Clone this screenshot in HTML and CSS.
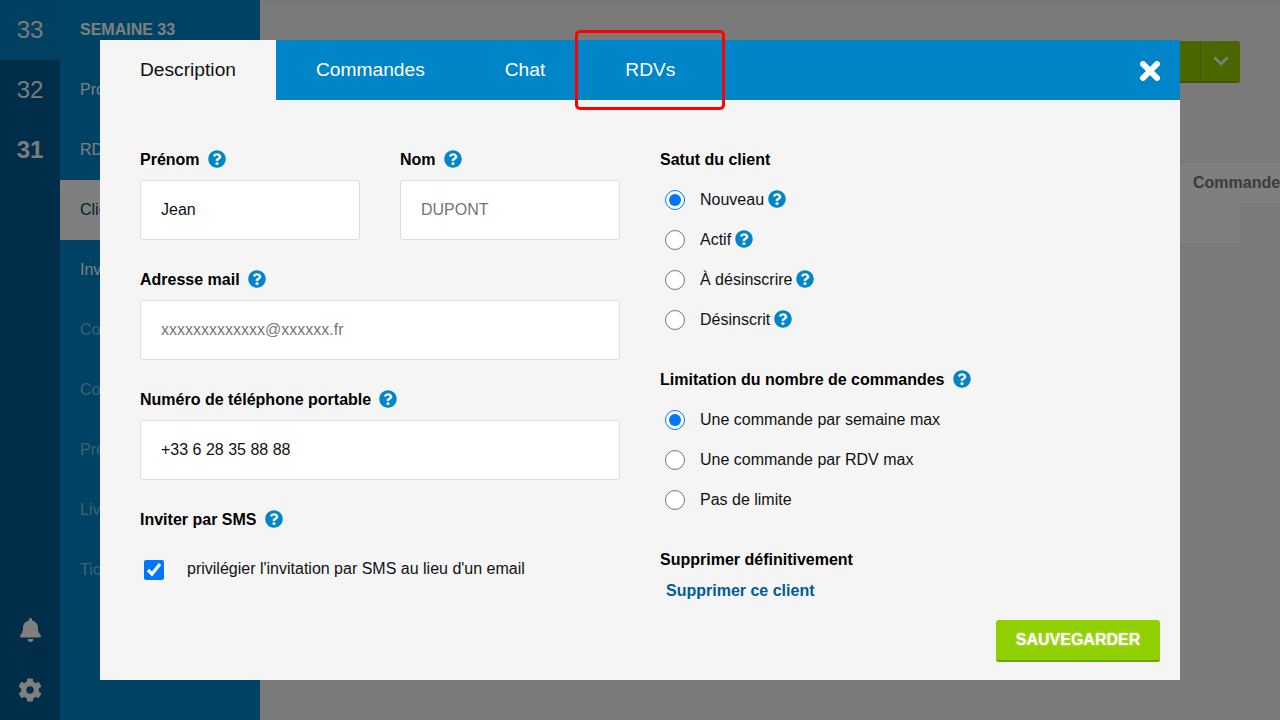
FILE: index.html
```html
<!DOCTYPE html>
<html lang="fr">
<head>
<meta charset="utf-8">
<title>Client</title>
<link rel="stylesheet" href="styles.css">
</head>
<body>
<svg class="defs" width="0" height="0" aria-hidden="true">
  <symbol id="help" viewBox="0 0 512 512"><path d="M504 256c0 136.997-111.043 248-248 248S8 392.997 8 256C8 119.083 119.043 8 256 8s248 111.083 248 248zM262.655 90c-54.497 0-89.255 22.957-116.549 63.758-3.536 5.286-2.353 12.415 2.715 16.258l34.699 26.31c5.205 3.947 12.621 3.008 16.665-2.122 17.864-22.658 30.113-35.797 57.303-35.797 20.429 0 45.698 13.148 45.698 32.958 0 14.976-12.363 22.667-32.534 33.976C247.128 238.528 216 254.941 216 296v4c0 6.627 5.373 12 12 12h56c6.627 0 12-5.373 12-12v-1.333c0-28.462 83.186-29.647 83.186-106.667 0-58.002-60.165-102-116.531-102zM256 338c-25.365 0-46 20.635-46 46 0 25.364 20.635 46 46 46s46-20.636 46-46c0-25.365-20.635-46-46-46z"/></symbol>
</svg>
<div class="app">
  <nav class="rail">
    <div class="week current">33</div>
    <div class="week">32</div>
    <div class="week strong">31</div>
    <div class="rail-spacer"></div>
    <div class="rail-icon"><svg class="bell" viewBox="0 0 448 512"><path d="M224 512c35.32 0 63.97-28.65 63.97-64H160.03c0 35.35 28.65 64 63.97 64zm215.39-149.71c-19.32-20.76-55.47-51.99-55.47-154.29 0-77.7-54.48-139.9-127.94-155.16V32c0-17.67-14.32-32-31.98-32s-31.98 14.33-31.98 32v20.84C118.56 68.1 64.08 130.3 64.08 208c0 102.3-36.15 133.53-55.47 154.29-6 6.45-8.66 14.16-8.61 21.71.11 16.4 12.98 32 32.1 32h383.8c19.12 0 32-15.6 32.1-32 .05-7.55-2.61-15.27-8.61-21.71z"/></svg></div>
    <div class="rail-icon"><svg class="cog" viewBox="0 0 512 512"><path d="M487.4 315.7l-42.6-24.6c4.3-23.2 4.3-47 0-70.2l42.6-24.6c4.9-2.8 7.1-8.6 5.5-14-11.1-35.6-30-67.8-54.7-94.6-3.8-4.1-10-5.1-14.8-2.3L380.8 110c-17.9-15.4-38.5-27.3-60.8-35.1V25.8c0-5.6-3.9-10.5-9.4-11.7-36.7-8.2-74.3-7.8-109.2 0-5.5 1.2-9.4 6.1-9.4 11.7V75c-22.2 7.9-42.8 19.8-60.8 35.1L88.7 85.5c-4.9-2.8-11-1.9-14.8 2.3-24.7 26.7-43.6 58.9-54.7 94.6-1.7 5.4.6 11.2 5.5 14L67.3 221c-4.3 23.2-4.3 47 0 70.2l-42.6 24.6c-4.9 2.8-7.1 8.6-5.5 14 11.1 35.6 30 67.8 54.7 94.6 3.8 4.1 10 5.1 14.8 2.3l42.6-24.6c17.9 15.4 38.5 27.3 60.8 35.1v49.2c0 5.6 3.9 10.5 9.4 11.7 36.7 8.2 74.3 7.8 109.2 0 5.5-1.2 9.4-6.1 9.4-11.7v-49.2c22.2-7.9 42.8-19.8 60.8-35.1l42.6 24.6c4.9 2.8 11 1.9 14.8-2.3 24.7-26.7 43.6-58.9 54.7-94.6 1.5-5.5-.7-11.3-5.6-14.1zM256 336c-44.1 0-80-35.9-80-80s35.9-80 80-80 80 35.9 80 80-35.9 80-80 80z"/></svg></div>
  </nav>
  <aside class="sidebar">
    <div class="side-item title">SEMAINE 33</div>
    <div class="side-item">Produits</div>
    <div class="side-item">RDVs</div>
    <div class="side-item active">Clients</div>
    <div class="side-item">Invitations</div>
    <div class="side-item faded">Commandes</div>
    <div class="side-item faded">Comptes</div>
    <div class="side-item faded">Présentation</div>
    <div class="side-item faded">Livraisons</div>
    <div class="side-item faded">Tickets</div>
  </aside>
  <main class="main">
    <div class="topbar">
      <div class="btn-group"><span class="btn-main"></span><span class="btn-caret"><svg viewBox="0 0 16 10" class="caret"><path d="M1.500 1.500 8 8l6.500-6.500"/></svg></span></div>
    </div>
    <div class="bg-tabs"><span class="bg-tab">Commandes</span></div>
    <div class="bg-panel"></div>
  </main>
</div>

<div class="overlay">
  <section class="modal">
    <header class="tabs">
      <a class="tab selected">Description</a>
      <a class="tab">Commandes</a>
      <a class="tab">Chat</a>
      <a class="tab">RDVs</a>
      <span class="tab-highlight"></span>
      <button class="close" aria-label="Fermer"><svg viewBox="0 0 20 20"><path d="M3 3 17 17M17 3 3 17"/></svg></button>
    </header>
    <div class="modal-body">
      <div class="col-left">
        <div class="name-row">
          <div class="field">
            <label class="label">Prénom <svg class="help"><use href="#help"/></svg></label>
            <input class="input" type="text" value="Jean">
          </div>
          <div class="field">
            <label class="label">Nom <svg class="help"><use href="#help"/></svg></label>
            <input class="input" type="text" placeholder="DUPONT">
          </div>
        </div>
        <div class="field">
          <label class="label">Adresse mail <svg class="help"><use href="#help"/></svg></label>
          <input class="input" type="text" placeholder="xxxxxxxxxxxxx@xxxxxx.fr">
        </div>
        <div class="field">
          <label class="label">Numéro de téléphone portable <svg class="help"><use href="#help"/></svg></label>
          <input class="input" type="text" value="+33 6 28 35 88 88">
        </div>
        <div class="field">
          <label class="label">Inviter par SMS <svg class="help"><use href="#help"/></svg></label>
          <label class="check-row"><input class="check" type="checkbox" checked><span>privilégier l'invitation par SMS au lieu d'un email</span></label>
        </div>
      </div>
      <div class="col-right">
        <div class="group">
          <div class="label">Satut du client</div>
          <label class="radio-row"><input class="radio" type="radio" name="statut" checked><span>Nouveau</span><svg class="help tight"><use href="#help"/></svg></label>
          <label class="radio-row"><input class="radio" type="radio" name="statut"><span>Actif</span><svg class="help tight"><use href="#help"/></svg></label>
          <label class="radio-row"><input class="radio" type="radio" name="statut"><span>À désinscrire</span><svg class="help tight"><use href="#help"/></svg></label>
          <label class="radio-row"><input class="radio" type="radio" name="statut"><span>Désinscrit</span><svg class="help tight"><use href="#help"/></svg></label>
        </div>
        <div class="group">
          <div class="label">Limitation du nombre de commandes <svg class="help"><use href="#help"/></svg></div>
          <label class="radio-row"><input class="radio" type="radio" name="limite" checked><span>Une commande par semaine max</span></label>
          <label class="radio-row"><input class="radio" type="radio" name="limite"><span>Une commande par RDV max</span></label>
          <label class="radio-row"><input class="radio" type="radio" name="limite"><span>Pas de limite</span></label>
        </div>
        <div class="group">
          <div class="label">Supprimer définitivement</div>
          <a class="danger-link">Supprimer ce client</a>
        </div>
      </div>
    </div>
    <footer class="modal-footer"><button class="save">SAUVEGARDER</button></footer>
  </section>
</div>
</body>
</html>
```
FILE: styles.css
```css
* { box-sizing: border-box; }
html, body { margin: 0; height: 100%; }
body { font-family: "Liberation Sans", Arial, sans-serif; font-size: 16px; color: #111; overflow: hidden; }
.defs { display: block; height: 0; }

.app { display: flex; height: 720px; background: #f5f5f5; }

.rail { width: 60px; flex: none; background: #005a94; display: flex; flex-direction: column; }
.week { height: 60px; display: flex; align-items: center; justify-content: center; font-size: 24px; color: #fff; opacity: .95; }
.week.current { background: #0085c8; }
.week.strong { font-weight: 700; }
.rail-spacer { flex: 1; }
.rail-icon { height: 60px; display: flex; align-items: center; justify-content: center; }
.rail-icon svg { fill: #fff; display: block; }
.bell { width: 21px; height: 24px; }
.cog { width: 24px; height: 24px; }

.sidebar { width: 200px; flex: none; background: #0085c8; }
.side-item { height: 60px; padding-left: 20px; display: flex; align-items: center; color: #fff; white-space: nowrap; }
.side-item.title { font-weight: 700; }
.side-item.active { background: #fff; color: #00426a; }
.side-item.faded { color: rgba(255,255,255,.5); }

.main { flex: 1; min-width: 0; border-top: 1px solid #e8e8e8; padding-right: 40px; overflow: hidden; }
.topbar { height: 162px; padding-top: 40px; display: flex; justify-content: flex-end; }
.btn-group { display: flex; height: 42px; width: 200px; background: #96d000; border-bottom: 2px solid #7aac00; border-radius: 3px; }
.btn-main { flex: 1; }
.btn-caret { width: 40px; border-left: 1px solid #80b400; display: flex; align-items: center; justify-content: center; }
.caret { width: 16px; height: 10px; fill: none; stroke: #fff; stroke-width: 2.6px; }
.bg-tabs { margin-left: 920px; width: 140px; height: 40px; background: #fff; display: flex; align-items: center; padding-left: 13px; font-weight: 700; color: #777; white-space: nowrap; }
.bg-panel { height: 40px; background: #fff; }

.overlay { position: fixed; inset: 0; background: rgba(0,0,0,.5); display: flex; align-items: center; justify-content: center; }
.modal { width: 1080px; height: 640px; background: #f5f5f5; display: flex; flex-direction: column; }

.tabs { height: 60px; flex: none; background: #0085c8; display: flex; position: relative; }
.tab { padding: 0 40px; display: flex; align-items: center; color: #fff; font-size: 19.2px; }
.tab.selected { background: #f5f5f5; color: #111; }
.tab-highlight { position: absolute; left: 475px; top: -10px; width: 150px; height: 80px; border: 3px solid #f00; border-radius: 5px; }
.close { margin-left: auto; margin-right: 20px; margin-top: 21px; width: 20px; height: 20px; padding: 0; border: 0; background: none; }
.close svg { display: block; width: 20px; height: 20px; fill: none; stroke: #fff; stroke-width: 6px; stroke-linecap: round; }

.modal-body { flex: 1; min-height: 0; padding: 40px 40px 0; display: flex; gap: 40px; }
.col-left { width: 480px; flex: none; }
.col-right { flex: 1; }
.name-row { display: flex; gap: 40px; }
.name-row .field { width: 220px; }
.field { margin-bottom: 20px; }
.label { height: 40px; display: flex; align-items: center; font-weight: 700; color: #000; gap: 8.2px; }
.help { width: 18px; height: 18px; fill: #0085c8; flex: none; margin-top: -2px; }
.help.tight { margin-left: 4px; }
.input { display: block; width: 100%; height: 60px; padding: 0 20px; border: 1px solid #ddd; border-radius: 3px; background: #fff; font: 16px "Liberation Sans", Arial, sans-serif; color: #111; }
.check-row { display: flex; align-items: center; height: 60px; padding-left: 4px; }
.check { width: 20px; height: 20px; margin: 0 23px 0 0; flex: none; }
.check-row span { margin-top: -2px; }

.group { margin-bottom: 20px; }
.radio-row { display: flex; align-items: center; height: 40px; padding-left: 5px; }
.radio { width: 20px; height: 20px; margin: 0 15px 0 0; flex: none; }
.danger-link { display: block; padding-left: 6px; line-height: 22px; font-weight: 700; color: #005c94; }

.modal-footer { height: 60px; flex: none; display: flex; justify-content: flex-end; padding-right: 20px; }
.save { width: 164px; height: 42px; padding: 0; border: 0; border-bottom: 2px solid #64a800; border-radius: 3px; background: #90d000; color: #fff; font: 700 16px "Liberation Sans", Arial, sans-serif; text-shadow: 0 0 3px rgba(255,255,255,.5); }
```
